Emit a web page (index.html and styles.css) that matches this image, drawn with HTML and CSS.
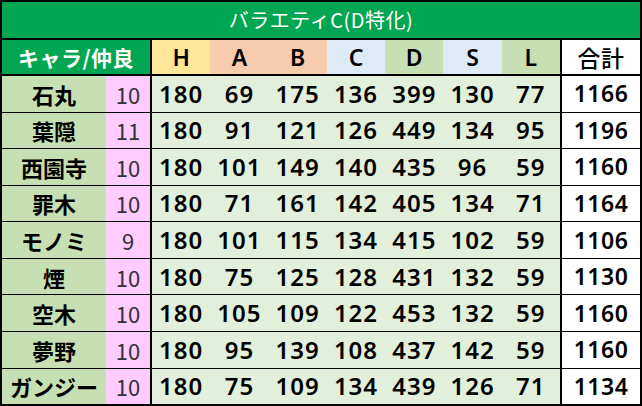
FILE: index.html
```html
<!DOCTYPE html>
<html lang="ja">
<head>
<meta charset="utf-8">
<title>バラエティC(D特化)</title>
<link rel="stylesheet" href="styles.css">
</head>
<body>
<div class="sheet">
  <div class="title">バラエティC(D特化)</div>
  <div class="row head">
    <div class="cell c-label">キャラ/仲良</div>
    <div class="stats">
      <div class="cell h">H</div><div class="cell a">A</div><div class="cell b">B</div><div class="cell c">C</div><div class="cell d">D</div><div class="cell s">S</div><div class="cell l">L</div>
    </div>
    <div class="cell c-total">合計</div>
  </div>
  <div class="body">
    <div class="row"><div class="cell c-name">石丸</div><div class="cell c-bond">10</div><div class="stats"><div class="cell">180</div><div class="cell">69</div><div class="cell">175</div><div class="cell">136</div><div class="cell">399</div><div class="cell">130</div><div class="cell">77</div></div><div class="cell c-total">1166</div></div>
    <div class="row"><div class="cell c-name">葉隠</div><div class="cell c-bond">11</div><div class="stats"><div class="cell">180</div><div class="cell">91</div><div class="cell">121</div><div class="cell">126</div><div class="cell">449</div><div class="cell">134</div><div class="cell">95</div></div><div class="cell c-total">1196</div></div>
    <div class="row"><div class="cell c-name">西園寺</div><div class="cell c-bond">10</div><div class="stats"><div class="cell">180</div><div class="cell">101</div><div class="cell">149</div><div class="cell">140</div><div class="cell">435</div><div class="cell">96</div><div class="cell">59</div></div><div class="cell c-total">1160</div></div>
    <div class="row"><div class="cell c-name">罪木</div><div class="cell c-bond">10</div><div class="stats"><div class="cell">180</div><div class="cell">71</div><div class="cell">161</div><div class="cell">142</div><div class="cell">405</div><div class="cell">134</div><div class="cell">71</div></div><div class="cell c-total">1164</div></div>
    <div class="row"><div class="cell c-name">モノミ</div><div class="cell c-bond">9</div><div class="stats"><div class="cell">180</div><div class="cell">101</div><div class="cell">115</div><div class="cell">134</div><div class="cell">415</div><div class="cell">102</div><div class="cell">59</div></div><div class="cell c-total">1106</div></div>
    <div class="row"><div class="cell c-name">煙</div><div class="cell c-bond">10</div><div class="stats"><div class="cell">180</div><div class="cell">75</div><div class="cell">125</div><div class="cell">128</div><div class="cell">431</div><div class="cell">132</div><div class="cell">59</div></div><div class="cell c-total">1130</div></div>
    <div class="row"><div class="cell c-name">空木</div><div class="cell c-bond">10</div><div class="stats"><div class="cell">180</div><div class="cell">105</div><div class="cell">109</div><div class="cell">122</div><div class="cell">453</div><div class="cell">132</div><div class="cell">59</div></div><div class="cell c-total">1160</div></div>
    <div class="row"><div class="cell c-name">夢野</div><div class="cell c-bond">10</div><div class="stats"><div class="cell">180</div><div class="cell">95</div><div class="cell">139</div><div class="cell">108</div><div class="cell">437</div><div class="cell">142</div><div class="cell">59</div></div><div class="cell c-total">1160</div></div>
    <div class="row"><div class="cell c-name">ガンジー</div><div class="cell c-bond">10</div><div class="stats"><div class="cell">180</div><div class="cell">75</div><div class="cell">109</div><div class="cell">134</div><div class="cell">439</div><div class="cell">126</div><div class="cell">71</div></div><div class="cell c-total">1134</div></div>
  </div>
</div>
</body>
</html>
```

FILE: styles.css
```css
html, body {
  margin: 0;
  padding: 0;
  background: #ffffff;
}

body {
  font-family: "Noto Sans CJK JP", "Noto Sans", sans-serif;
  color: #000000;
}

.sheet {
  box-sizing: border-box;
  width: 642px;
  height: 406px;
  border: 2px solid #000000;
  display: flex;
  flex-direction: column;
}

.title {
  height: 36px;
  border-bottom: 2px solid #000000;
  background: #00a651;
  color: #ffffff;
  font-size: 20px;
  line-height: 36px;
  text-align: center;
  font-weight: 400;
  letter-spacing: 0.5px;
}

.row {
  display: flex;
  align-items: stretch;
}

.cell {
  display: flex;
  align-items: center;
  justify-content: center;
  line-height: 1;
}

.head {
  height: 34px;
  border-bottom: 2px solid #000000;
}

.c-label {
  width: 148px;
  background: #00a651;
  color: #ffffff;
  font-size: 21px;
  font-weight: 700;
  letter-spacing: 0.5px;
  border-right: 2px solid #000000;
}

.stats {
  width: 408px;
  display: grid;
  grid-template-columns: repeat(7, 1fr);
  border-right: 2px solid #000000;
}

.head .stats .cell {
  font-family: "Noto Sans", "Noto Sans CJK JP", sans-serif;
  font-size: 23px;
  font-weight: 600;
}

.h { background: #ffe699; }
.a, .b { background: #f8cbad; }
.c, .s { background: #ddebf7; }
.d, .l { background: #c6e0b4; }

.c-total {
  flex: 1;
  background: #ffffff;
  font-family: "Noto Sans", "Noto Sans CJK JP", sans-serif;
  font-size: 23px;
  font-weight: 600;
  letter-spacing: 0.5px;
}

.head .c-total {
  font-family: "Noto Sans CJK JP", sans-serif;
  font-size: 23px;
  font-weight: 500;
}

.body {
  flex: 1;
  display: flex;
  flex-direction: column;
}

.body .row {
  flex: 1;
  border-top: 1.5px solid #000000;
}

.body .row:first-child {
  border-top: none;
}

.c-name {
  width: 104px;
  background: #c6e0b4;
  font-size: 22px;
  font-weight: 700;
}

.c-bond {
  width: 44px;
  background: #ffccff;
  border-right: 2px solid #000000;
  font-size: 22px;
  font-weight: 400;
  color: #333333;
}

.body .stats {
  background: #e2efda;
  font-family: "Noto Sans", "Noto Sans CJK JP", sans-serif;
  font-size: 24px;
  font-weight: 600;
  letter-spacing: 1px;
}
```
